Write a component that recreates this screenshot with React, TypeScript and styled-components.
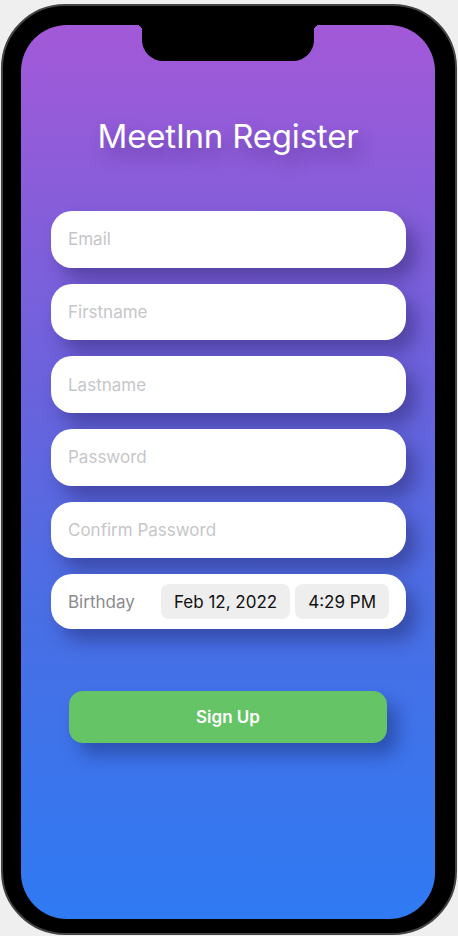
import styled, { createGlobalStyle } from 'styled-components';

const GlobalStyle = createGlobalStyle`
    html, body {
        margin: 0;
        padding: 0;
        background: #efefef;
    }
    body {
        font-family: Inter, 'Noto Sans', sans-serif;
        -webkit-font-smoothing: antialiased;
    }
`;

const fields = ['Email', 'Firstname', 'Lastname', 'Password', 'Confirm Password'];

const App = () => {
    return (
        <>
            <GlobalStyle />
            <Phone>
                <Screen>
                    <Notch />
                    <Title>MeetInn Register</Title>
                    <Form>
                        {fields.map((f) => (
                            <Field key={f} placeholder={f} type={f.includes('Password') ? 'password' : 'text'} />
                        ))}
                        <BirthdayRow>
                            <Label>Birthday</Label>
                            <Pickers>
                                <Pill>Feb 12, 2022</Pill>
                                <Pill>4:29 PM</Pill>
                            </Pickers>
                        </BirthdayRow>
                    </Form>
                    <SignUp>Sign Up</SignUp>
                </Screen>
            </Phone>
        </>
    );
};

export default App;

const Phone = styled.div`
    box-sizing: border-box;
    width: 456px;
    height: 931px;
    margin: 4px 0 0 1px;
    padding: 19px 20px 14px 18px;
    background: #000;
    border: 2px solid #444;
    border-radius: 64px;
`;

const Screen = styled.div`
    position: relative;
    box-sizing: border-box;
    width: 414px;
    height: 894px;
    border-radius: 46px;
    overflow: hidden;
    background: linear-gradient(180deg, #a359d8 0%, #6b62dc 40%, #4a6ee4 65%, #2f7af3 100%);
    padding-top: 91px;
    display: flex;
    flex-direction: column;
    align-items: center;
`;

const Notch = styled.div`
    position: absolute;
    top: 0;
    left: 121px;
    width: 172px;
    height: 36px;
    background: #000;
    border-radius: 0 0 21px 21px;

    &::before,
    &::after {
        content: '';
        position: absolute;
        top: 0;
        width: 6px;
        height: 6px;
    }
    &::before {
        left: -6px;
        background: radial-gradient(circle at 0 100%, transparent 6px, #000 6.5px);
    }
    &::after {
        right: -6px;
        background: radial-gradient(circle at 100% 100%, transparent 6px, #000 6.5px);
    }
`;

const Title = styled.h1`
    margin: 0;
    font-size: 33px;
    font-weight: 400;
    line-height: 40px;
    color: #fff;
    letter-spacing: -0.2px;
    text-shadow: 6px 10px 16px rgba(40, 20, 90, 0.35);
`;

const Form = styled.div`
    margin-top: 55px;
    display: flex;
    flex-direction: column;
    gap: 16.2px;
    width: 355px;
    margin-left: 1px;
`;

const Field = styled.input`
    box-sizing: border-box;
    height: 56.5px;
    width: 100%;
    border: none;
    outline: none;
    border-radius: 21px;
    background: #fff;
    padding: 0 17px;
    font-family: Inter, sans-serif;
    font-size: 17px;
    color: #222;
    box-shadow: 10px 12px 18px rgba(25, 20, 80, 0.38);

    &::placeholder {
        color: #c6c6c9;
    }
`;

const BirthdayRow = styled.div`
    box-sizing: border-box;
    height: 55px;
    border-radius: 21px;
    background: #fff;
    padding: 0 17px;
    display: flex;
    align-items: center;
    justify-content: space-between;
    box-shadow: 10px 12px 18px rgba(25, 20, 80, 0.38);
`;

const Label = styled.span`
    font-size: 17px;
    color: #8b8b8f;
`;

const Pickers = styled.div`
    display: flex;
    gap: 5px;
`;

const Pill = styled.div`
    height: 35px;
    padding: 0 13px;
    display: flex;
    align-items: center;
    border-radius: 8px;
    background: #eeeeef;
    font-size: 17px;
    color: #111;
`;

const SignUp = styled.button`
    margin-top: 62px;
    width: 318px;
    height: 52px;
    border: none;
    border-radius: 14px;
    background: #65c466;
    color: #fff;
    font-family: Inter, sans-serif;
    font-size: 17px;
    font-weight: 600;
    box-shadow: 10px 12px 18px rgba(20, 30, 90, 0.4);
`;
